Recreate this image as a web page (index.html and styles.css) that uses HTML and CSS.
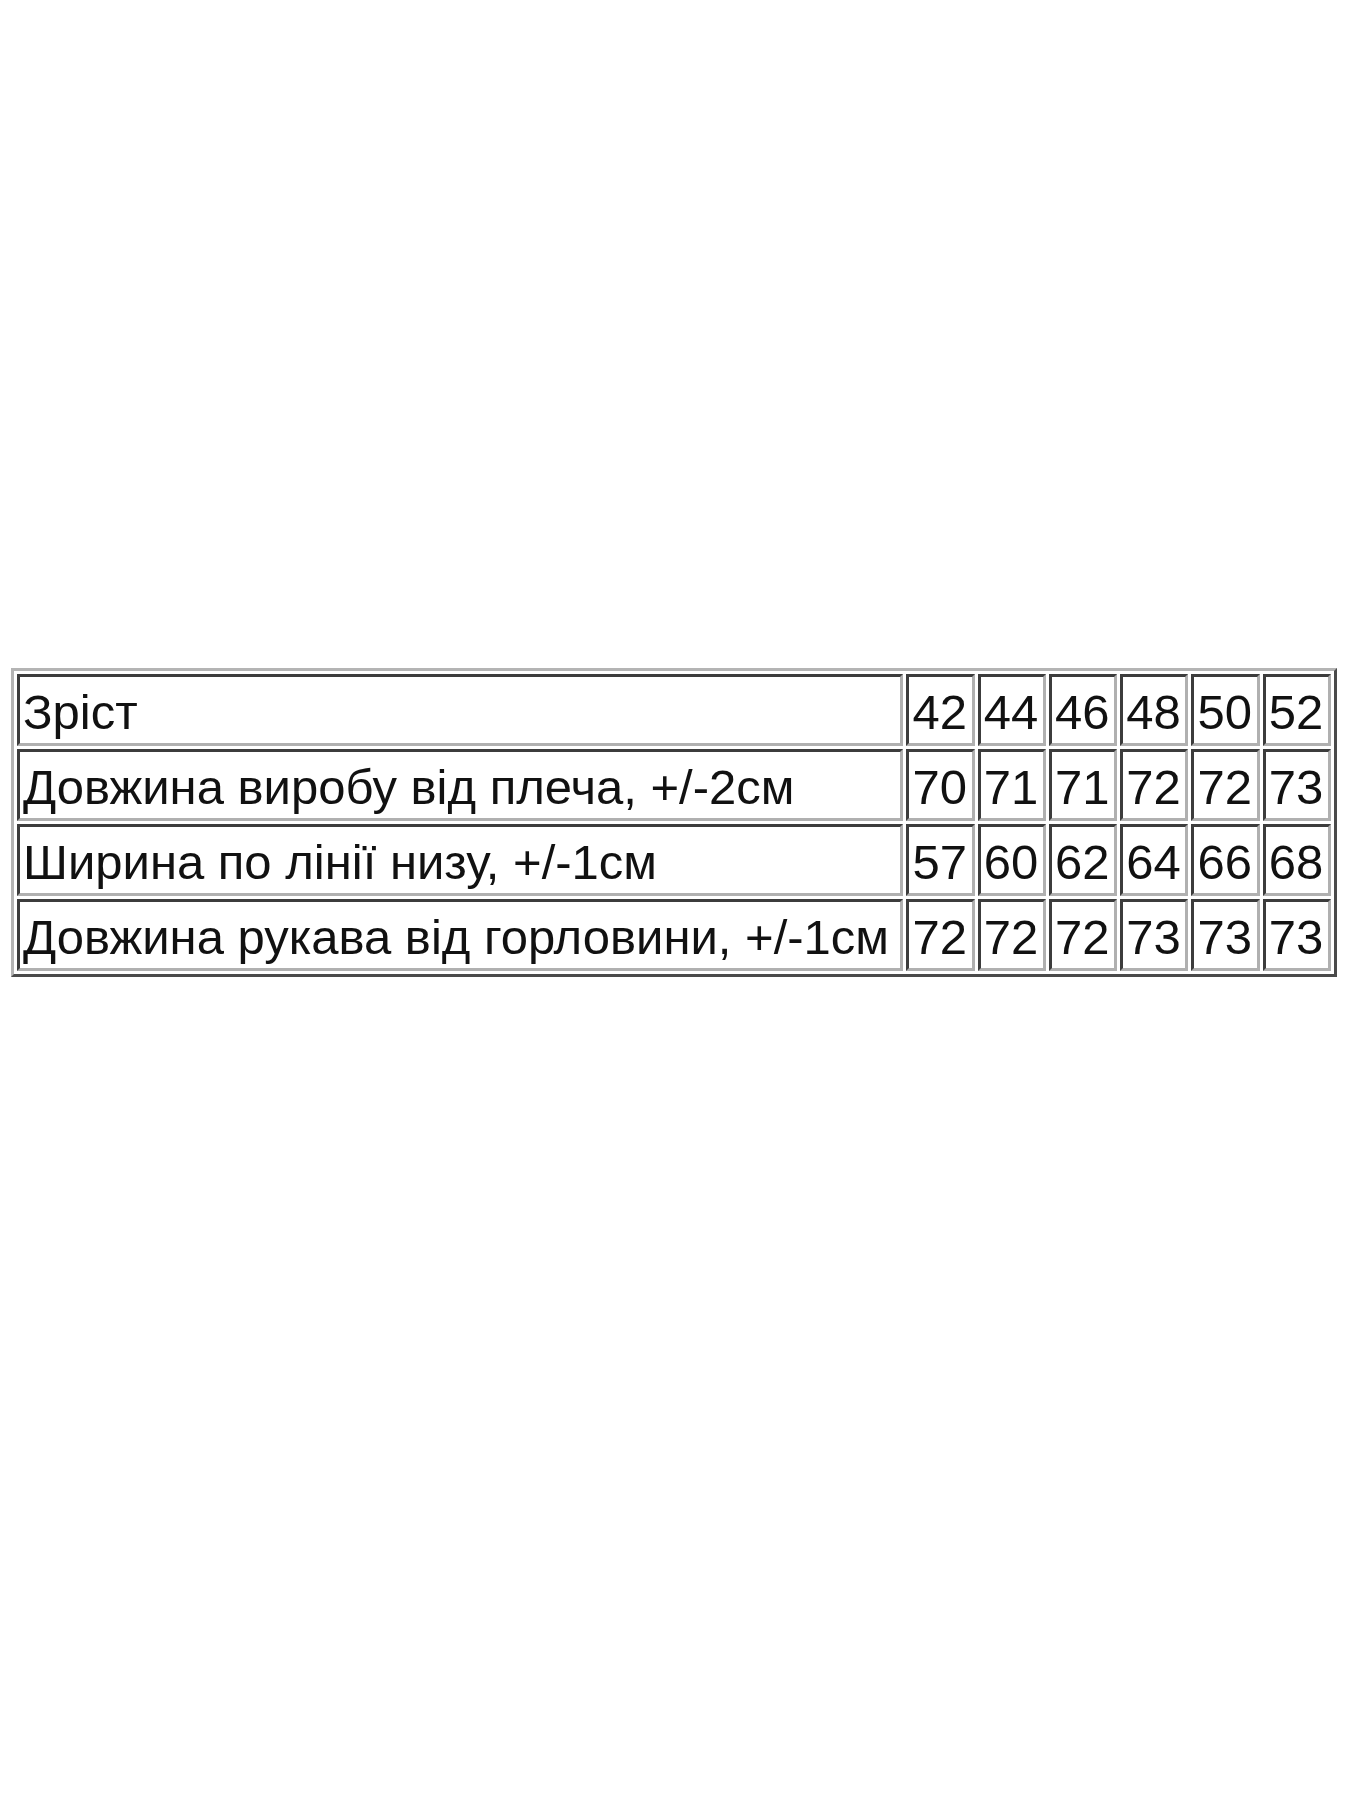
FILE: index.html
```html
<!DOCTYPE html>
<html lang="uk">
<head>
<meta charset="utf-8">
<title>Розмірна сітка</title>
<link rel="stylesheet" href="styles.css">
</head>
<body>
<main class="page">
  <table class="sizes">
    <tr>
      <td class="label">Зріст</td>
      <td class="num">42</td><td class="num">44</td><td class="num">46</td><td class="num">48</td><td class="num">50</td><td class="num">52</td>
    </tr>
    <tr>
      <td class="label">Довжина виробу від плеча, +/-2см</td>
      <td class="num">70</td><td class="num">71</td><td class="num">71</td><td class="num">72</td><td class="num">72</td><td class="num">73</td>
    </tr>
    <tr>
      <td class="label">Ширина по лінії низу, +/-1см</td>
      <td class="num">57</td><td class="num">60</td><td class="num">62</td><td class="num">64</td><td class="num">66</td><td class="num">68</td>
    </tr>
    <tr>
      <td class="label">Довжина рукава від горловини, +/-1см</td>
      <td class="num">72</td><td class="num">72</td><td class="num">72</td><td class="num">73</td><td class="num">73</td><td class="num">73</td>
    </tr>
  </table>
</main>
</body>
</html>
```

FILE: styles.css
```css
html, body {
  margin: 0;
  padding: 0;
  background: #ffffff;
}

.page {
  padding: 668px 0 0 11px;
}

.sizes {
  width: 1326px;
  border-collapse: separate;
  border-spacing: 3px;
  border-style: solid;
  border-width: 3px;
  border-color: #b4b4b4 #4a4a4a #4a4a4a #b4b4b4;
  font-family: "Liberation Sans", Arial, sans-serif;
  font-size: 49px;
  line-height: 58px;
  color: #111111;
}

.sizes td {
  height: 58px;
  padding: 6px 1px 2px 3px;
  border-style: solid;
  border-width: 3px;
  border-color: #3c3c3c #b0b0b0 #b0b0b0 #3c3c3c;
  text-align: left;
  vertical-align: middle;
  white-space: nowrap;
}

.sizes td.label {
  width: 884px;
}

.sizes td.num {
  width: 61px;
}
```
